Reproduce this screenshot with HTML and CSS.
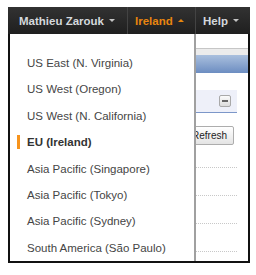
FILE: index.html
```html
<!DOCTYPE html>
<html lang="en">
<head>
<meta charset="UTF-8">
<title>Region menu</title>
<link rel="stylesheet" href="styles.css">
</head>
<body>
<div class="console">
    <div class="topbar">
        <div class="nav-item user">Mathieu Zarouk <span class="caret"></span></div>
        <div class="nav-item region">Ireland <span class="caret up"></span></div>
        <div class="nav-item help">Help <span class="caret"></span></div>
    </div>

    <div class="page">
        <div class="content">
            <div class="panel-head"></div>
            <div class="grid-row"><span class="mini-btn"></span></div>
            <div class="toolbar"><button class="refresh">Refresh</button></div>
            <div class="dots first"></div>
            <div class="dots"></div>
            <div class="dots"></div>
            <div class="dots"></div>
        </div>

        <ul class="region-menu">
            <li>US East (N. Virginia)</li>
            <li>US West (Oregon)</li>
            <li>US West (N. California)</li>
            <li class="current">EU (Ireland)</li>
            <li>Asia Pacific (Singapore)</li>
            <li>Asia Pacific (Tokyo)</li>
            <li>Asia Pacific (Sydney)</li>
            <li>South America (São Paulo)</li>
        </ul>
    </div>
</div>
</body>
</html>
```

FILE: styles.css
```css
body {
    margin: 0;
    background: #fff;
    font-family: 'Liberation Sans', Arial, sans-serif;
}

.console {
    margin: 7px 0 0 8px;
    width: 242px;
}

/* top navigation bar */
.topbar {
    display: flex;
    height: 27px;
    background: linear-gradient(#323232, #1f1f1f);
}

.nav-item {
    display: flex;
    align-items: center;
    padding-left: 7px;
    border-left: 1px solid #434343;
    color: #d4d8dc;
    font-size: 11.5px;
    font-weight: bold;
    white-space: nowrap;
}

.nav-item.user {
    width: 108px;
    padding-left: 11px;
    border-left: 0;
}

.nav-item.region {
    width: 60px;
    color: #e8850f;
}

.caret {
    display: inline-block;
    width: 0;
    height: 0;
    margin-left: 5px;
    border-left: 3px solid transparent;
    border-right: 3px solid transparent;
    border-top: 3px solid #c4c4c4;
}

.caret.up {
    border-top: 0;
    border-bottom: 3px solid #e8850f;
}

/* page under the menu */
.page {
    position: relative;
    height: 227px;
    border: 2px solid #111;
    border-top: 0;
}

.content {
    padding-top: 14px;
}

.panel-head {
    height: 24px;
    border-top: 1px solid #c6c6c6;
    background: linear-gradient(#ececec 0, #ececec 6px, #aac0de 6px, #6c8dc1 100%);
}

.grid-row {
    display: flex;
    align-items: center;
    justify-content: flex-end;
    height: 22px;
    margin: 17px 11px 0 0;
    padding-right: 6px;
    background: #eef0f9;
    border-bottom: 1px solid #7c97c9;
}

.mini-btn {
    display: flex;
    align-items: center;
    justify-content: center;
    box-sizing: border-box;
    width: 12px;
    height: 12px;
    border: 1px solid #a9a9a9;
    border-radius: 2px;
    background: linear-gradient(#fbfbfb, #dcdcdc);
}

.mini-btn::after {
    content: '';
    width: 6px;
    height: 2px;
    background: #666;
}

.toolbar {
    display: flex;
    justify-content: flex-end;
    margin-top: 13px;
    padding-right: 14px;
}

.refresh {
    height: 19px;
    padding: 0 6px;
    border: 1px solid #adadad;
    border-radius: 2px;
    background: linear-gradient(#fff, #e4e4e4);
    color: #222;
    font-family: 'Liberation Sans', Arial, sans-serif;
    font-size: 10px;
}

.dots {
    margin: 27px 11px 0 0;
    border-top: 1px dotted #c8c8c8;
}

.dots.first {
    margin-top: 22px;
}

/* region dropdown */
.region-menu {
    position: absolute;
    top: 0;
    left: 0;
    bottom: 0;
    width: 184px;
    margin: 0;
    padding: 16px 0 0;
    list-style: none;
    background: #fff;
    border-right: 2px solid #a0a0a0;
}

.region-menu li {
    position: relative;
    height: 26.4px;
    line-height: 26.4px;
    padding-left: 17px;
    color: #454545;
    font-size: 11.5px;
    white-space: nowrap;
}

.region-menu li.current {
    color: #333;
    font-weight: bold;
}

.region-menu li.current::before {
    content: '';
    position: absolute;
    left: 7px;
    top: 6px;
    width: 3px;
    height: 14px;
    background: #f7941d;
}
```
